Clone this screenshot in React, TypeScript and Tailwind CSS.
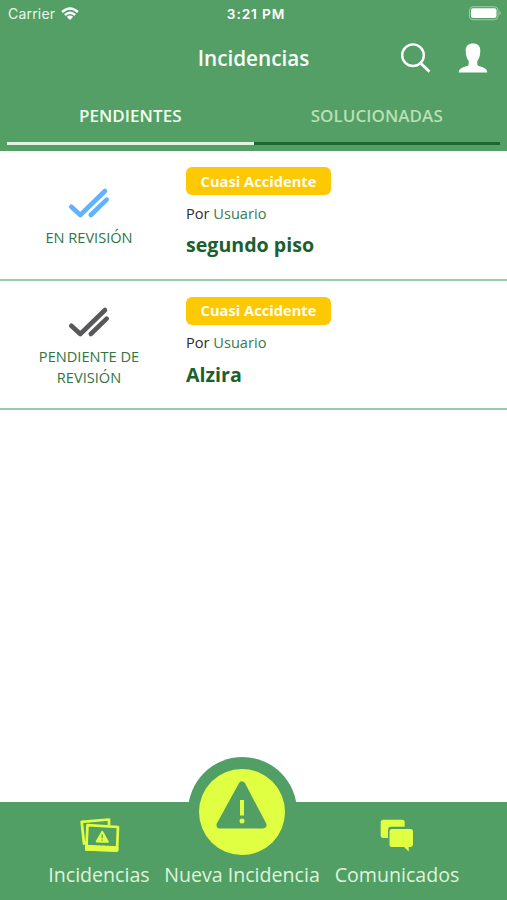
import React from "react";

type CheckProps = { className: string };

function DoubleCheck({ className }: CheckProps) {
  return (
    <svg width="42" height="32" viewBox="0 0 42 32" fill="none" stroke="currentColor" strokeWidth="4.6" strokeLinecap="round" strokeLinejoin="round" className={className}>
      <path d="M3.3 19.8 12.3 28 37 4" />
      <path d="M22.8 28 38.7 12.6" />
    </svg>
  );
}

type Incident = { status: string; checkColor: string; title: string };

const incidents: Incident[] = [
  { status: "EN REVISIÓN", checkColor: "text-[#62b1fb]", title: "segundo piso" },
  { status: "PENDIENTE DE REVISIÓN", checkColor: "text-[#58585a]", title: "Alzira" },
];

function IncidentRow({ item }: { item: Incident }) {
  return (
    <li className="flex h-[129.5px] border-b-2 border-[#9ccaaa] bg-white">
      <div className="flex w-[178px] shrink-0 flex-col items-center justify-center pt-[5px]">
        <DoubleCheck className={item.checkColor} />
        <span className="mt-[8px] w-[120px] text-center text-[14.6px] leading-[21px] text-[#2f7544]">{item.status}</span>
      </div>
      <div className="flex flex-col items-start pl-2 pt-4">
        <span className="flex h-7 w-[145px] items-center justify-center rounded-[6px] bg-[#fdc904] text-[14.7px] font-bold text-[#fffdf0]">Cuasi Accidente</span>
        <p className="mt-[6.5px] text-[14.6px] leading-[22px] text-[#2b2b2b]">
          Por <span className="text-[#3a7a4d]">Usuario</span>
        </p>
        <h2 className="mt-[7.5px] text-[19.6px] font-bold leading-[28px] text-[#1b602d]">{item.title}</h2>
      </div>
    </li>
  );
}

function StatusBar() {
  return (
    <div className="grid h-7 grid-cols-3 items-center pl-[8px] pr-[6px] font-['Inter',sans-serif] text-[#e9f8ea]">
      <div className="flex items-center gap-[6px]">
        <span className="-mt-px text-[14px] tracking-[0.2px]">Carrier</span>
        <svg width="18" height="14" viewBox="0 0 18 14" fill="none" stroke="#fff" strokeWidth="2.5" className="-mt-px">
          <path d="M1.1 5Q9-2 16.9 5" />
          <path d="M3.9 8Q9 3.6 14.1 8" />
          <path d="M9 13 5.8 9.8Q9 7.2 12.2 9.8Z" fill="#fff" stroke="none" />
        </svg>
      </div>
      <span className="whitespace-nowrap pl-[3px] pt-px text-center text-[13.7px] font-semibold tracking-[0.85px] text-white">3:21 PM</span>
      <svg width="33" height="15" viewBox="0 0 33 15" className="-mt-px justify-self-end">
        <rect x="1.5" y=".7" width="28.5" height="13" rx="3.5" fill="none" stroke="#9fcca6" />
        <rect x="3" y="2.3" width="25.5" height="9.8" rx="2" fill="#fff" />
        <path d="M31.3 5v4.5q1.4-.7 1.4-2.25T31.3 5Z" fill="#9fcca6" />
      </svg>
    </div>
  );
}

function PhotosIcon() {
  return (
    <svg width="40" height="35" viewBox="0 0 40 35" fill="none" stroke="#e0ff42" strokeWidth="2.7" strokeLinejoin="round">
      <path d="M29 7V1.5L1.7 3.8 4 25.6 7 24.5" />
      <path d="M7.5 7.2 38 9 37 32.5 6.3 31.5Z" />
      <path d="M6.4 28.2 37.1 29.5 37 32.3 6.3 31.3Z" fill="#e0ff42" />
      <path d="M22.3 13.7 28 23.9 16.6 23.5Z" fill="#e0ff42" strokeWidth="1.8" />
      <path d="M22.2 16.5v3.8M22.1 21.6v1.2" stroke="#529f65" strokeWidth="1.2" />
    </svg>
  );
}

function ChatIcon() {
  return (
    <svg width="34" height="33" viewBox="0 0 34 33" fill="#e0ff42">
      <path d="M3.2.8H22.2Q24.7.8 24.7 3.3V7.8H11.3Q8 7.8 8 11.2V19H3.2Q.7 19 .7 16.5V3.3Q.7.8 3.2.8Z" />
      <path d="M12 10H30.3Q33 10 33 12.7V25Q33 27.8 30.3 28H28.8L28.7 32.5 24 28H12Q9.5 28 9.5 25.5V12.7Q9.5 10 12 10Z" />
    </svg>
  );
}

export default function App() {
  return (
    <div className="flex h-[900px] w-[507px] flex-col overflow-hidden bg-white font-['Open_Sans','Noto_Sans',sans-serif]">
      <header className="h-[151px] shrink-0 bg-[#549f66]">
        <StatusBar />
        <div className="grid h-[61px] grid-cols-[1fr_auto_1fr] items-center pr-[19px] pl-[19px]">
          <span />
          <h1 className="text-[20.7px] font-semibold text-[#fbfff9]">Incidencias</h1>
          <div className="-mt-[2px] flex items-center justify-end gap-[27px]">
            <svg width="31" height="31" viewBox="0 0 31 31" fill="none" stroke="#fff" strokeWidth="2.4">
              <circle cx="13" cy="13.2" r="10.8" />
              <path d="M20.5 21 29.5 29.8" strokeWidth="2.8" />
            </svg>
            <svg width="30" height="30" viewBox="0 0 30 30" fill="#fff">
              <path d="M15 .5C10.4.5 7.7 3 7.7 7.2c0 4.6 1 8.4 3 10.8v2.9c0 1.3-.8 1.9-2.4 2.3C4 24.3 1 25.7.7 29.5h28.6c-.3-3.8-3.3-5.2-7.6-6.3-1.6-.4-2.4-1-2.4-2.3V18c2-2.4 3-6.2 3-10.8C22.3 3 19.6.5 15 .5Z" />
            </svg>
          </div>
        </div>
        <nav className="mx-[7px] grid h-[56px] grid-cols-2 text-[17px] leading-[24px]">
          <button className="border-b-[3px] border-[#e2f4e1] font-semibold tracking-[0.05px] text-[#f1fff0]">PENDIENTES</button>
          <button className="border-b-[3px] border-[#1b692f] font-semibold tracking-[0.05px] text-[#b9dfb5]">SOLUCIONADAS</button>
        </nav>
      </header>

      <ul className="flex-1">
        {incidents.map((item) => (
          <IncidentRow key={item.title} item={item} />
        ))}
      </ul>

      <footer className="relative grid h-[98px] shrink-0 grid-cols-[157px_170px_140px] bg-[#529f65] text-[19.6px] leading-[28px] text-[#dff4dc]">
        <a className="relative flex flex-col items-center pl-[41px] pt-4">
          <div className="pl-[2px]">
            <PhotosIcon />
          </div>
          <span className="mt-[8px] whitespace-nowrap">Incidencias</span>
        </a>
        <a className="relative flex flex-col items-center justify-end pb-[11px]">
          <div className="absolute -top-[45px] left-[30.5px] flex size-[109px] items-center justify-center rounded-full bg-[#529f65]">
            <div className="flex size-[86px] items-center justify-center rounded-full bg-[#e0ff42]">
              <svg width="52" height="48" viewBox="0 0 52 48" className="mb-[13px]">
                <path d="M26 4 47 44H4Z" fill="#529f65" stroke="#529f65" strokeWidth="7" strokeLinejoin="round" />
                <path d="M24 19h4v15.5h-4z" fill="#e0ff42" />
                <circle cx="26" cy="40" r="2.5" fill="#e0ff42" />
              </svg>
            </div>
          </div>
          <span className="relative whitespace-nowrap">Nueva Incidencia</span>
        </a>
        <a className="flex flex-col items-center pt-[17px]">
          <ChatIcon />
          <span className="mt-[9px] whitespace-nowrap">Comunicados</span>
        </a>
      </footer>
    </div>
  );
}
